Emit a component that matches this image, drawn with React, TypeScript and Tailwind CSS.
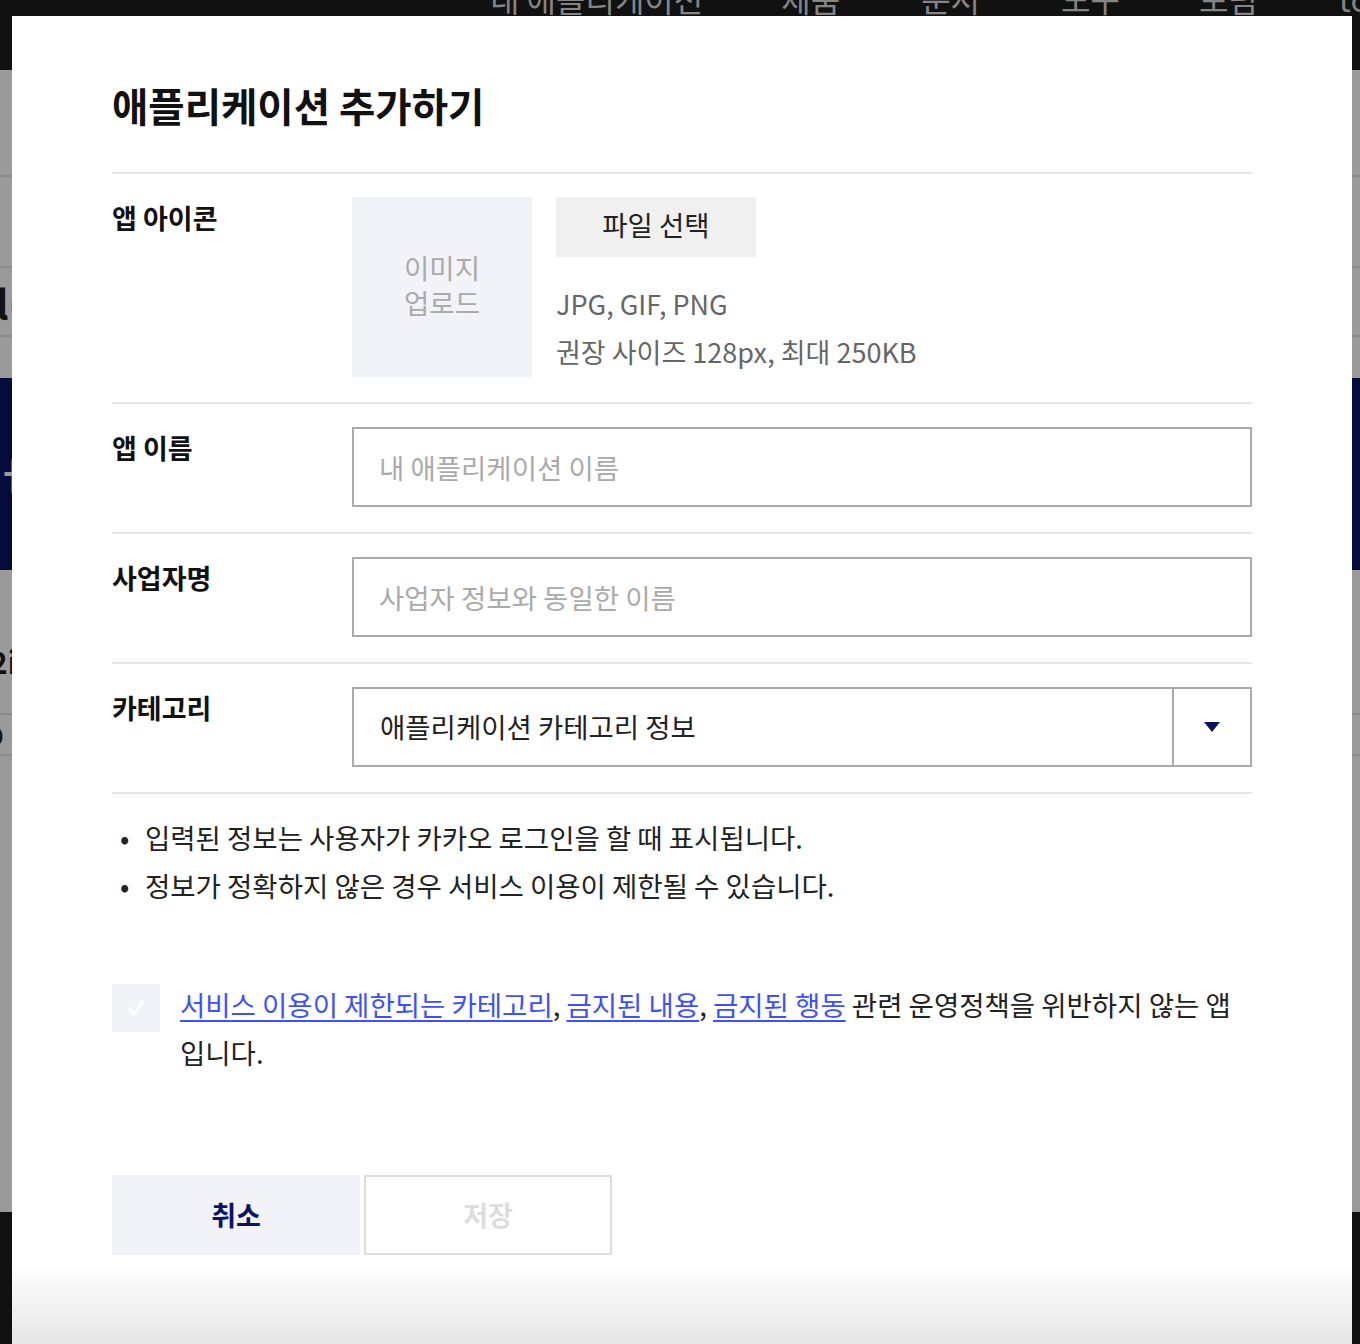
const font = { fontFamily: '"Noto Sans CJK KR", "Noto Sans", sans-serif' };

function Row({ label, children }: { label: string; children: React.ReactNode }) {
  return (
    <div className="flex border-b-2 border-[#e6e6e6] pt-[23px] pb-[25px]">
      <div className="w-[240px] shrink-0 text-[27px] leading-[42px] font-bold text-[#111]">{label}</div>
      <div className="flex-1">{children}</div>
    </div>
  );
}

export default function App() {
  return (
    <div className="relative w-[1360px] h-[1344px] overflow-hidden bg-[#9a9a9a]" style={font}>
      {/* page behind the dialog (already dimmed) */}
      <div className="h-[70px] bg-[#111] overflow-hidden">
        <div className="flex whitespace-nowrap text-[32px] leading-[32px] text-[#858585] -mt-[18px] [&>span]:shrink-0">
          <span className="ml-[490px]">내 애플리케이션</span>
          <span className="ml-[78px]">제품</span>
          <span className="ml-[81px]">문서</span>
          <span className="ml-[81px]">도구</span>
          <span className="ml-[79px]">포럼</span>
          <span className="ml-[81px]">tools</span>
        </div>
      </div>
      <div className="h-[308px]">
        <div className="h-[107px] border-b-2 border-[#8c8c8c]" />
        <div className="h-[91px] border-b-2 border-[#8c8c8c]" />
        <div className="h-[69px] border-b-2 border-[#8c8c8c] flex items-center">
          <span className="-ml-[4px] text-[40px] font-bold leading-[40px] text-[#111]">l(</span>
        </div>
      </div>
      <div className="h-[192px] bg-[#050c3c] flex items-center">
        <span className="-ml-[6px] text-[36px] font-bold text-[#9a9a9a]">ㅓ:</span>
      </div>
      <div className="h-[642px]">
        <div className="h-[76px]" />
        <span className="-ml-[10px] text-[30px] font-bold text-[#111] leading-[30px]">2i</span>
        <div className="h-[36px] border-b-2 border-[#8c8c8c]" />
        <span className="-ml-[14px] text-[26px] text-[#111]">D</span>
        <div className="h-[2px] bg-[#8c8c8c]" />
      </div>
      <div className="h-[132px] bg-[#111]" />

      {/* dialog */}
      <div className="absolute left-[12px] top-[16px] w-[1340px] h-[1328px] bg-[linear-gradient(to_bottom,#fff_calc(100%-80px),#e6e6e6)] px-[100px] pt-[65px]">
        <h1 className="text-[39.5px] leading-[48px] font-bold text-[#111] pb-[43px] border-b-2 border-[#e6e6e6]">애플리케이션 추가하기</h1>

        <Row label="앱 아이콘">
          <div className="flex gap-[24px]">
            <div className="w-[180px] h-[180px] bg-[#f2f3f8] flex items-center justify-center text-center text-[27.5px] leading-[35px] text-[#aaa] pb-[4px]">
              이미지<br />업로드
            </div>
            <div>
              <button className="w-[200px] h-[60px] bg-[#f0f0f0] text-[27.5px] text-[#222] pb-[4px]">파일 선택</button>
              <div className="mt-[23px] text-[27px] leading-[48px] text-[#666]">
                <p>JPG, GIF, PNG</p>
                <p>권장 사이즈 128px, 최대 250KB</p>
              </div>
            </div>
          </div>
        </Row>

        <Row label="앱 이름">
          <input className="w-full h-[80px] border-2 border-[#aaa] px-[25px] text-[27.5px] text-[#222] placeholder:text-[#aaa] outline-none" placeholder="내 애플리케이션 이름" />
        </Row>

        <Row label="사업자명">
          <input className="w-full h-[80px] border-2 border-[#aaa] px-[25px] text-[27.5px] text-[#222] placeholder:text-[#aaa] outline-none" placeholder="사업자 정보와 동일한 이름" />
        </Row>

        <Row label="카테고리">
          <div className="flex h-[80px] border-2 border-[#aaa]">
            <div className="flex-1 flex items-center px-[26px] text-[27.5px] text-[#222]">애플리케이션 카테고리 정보</div>
            <div className="w-[78px] border-l-2 border-[#aaa] flex items-center justify-center">
              <svg width="16" height="10" viewBox="0 0 16 10"><path d="M0 0h16L8 10z" fill="#0b1464" /></svg>
            </div>
          </div>
        </Row>

        <ul className="pt-[19px] text-[27.5px] leading-[48px] text-[#222]">
          <li className="flex"><span className="w-[33px] pl-[8px]">•</span>입력된 정보는 사용자가 카카오 로그인을 할 때 표시됩니다.</li>
          <li className="flex"><span className="w-[33px] pl-[8px]">•</span>정보가 정확하지 않은 경우 서비스 이용이 제한될 수 있습니다.</li>
        </ul>

        <div className="flex gap-[20px] mt-[71px]">
          <div className="w-[48px] h-[48px] shrink-0 mt-[4px] bg-[#f2f3f8] flex items-center justify-center">
            <svg width="20" height="18" viewBox="0 0 20 18"><path d="M3 9l5 6 9-13" stroke="#fff" strokeWidth="3" fill="none" /></svg>
          </div>
          <p className="text-[27.5px] leading-[48px] text-[#222]">
            <a href="#" className="text-[#3d4fff] underline underline-offset-4">서비스 이용이 제한되는 카테고리</a>,{' '}
            <a href="#" className="text-[#3d4fff] underline underline-offset-4">금지된 내용</a>,{' '}
            <a href="#" className="text-[#3d4fff] underline underline-offset-4">금지된 행동</a> 관련 운영정책을 위반하지 않는 앱입니다.
          </p>
        </div>

        <div className="flex gap-[4px] mt-[99px]">
          <button className="w-[248px] h-[80px] bg-[#f2f3f8] text-[27px] font-bold text-[#0b1464]">취소</button>
          <button className="w-[248px] h-[80px] border-2 border-[#ddd] text-[27px] font-bold text-[#ddd]">저장</button>
        </div>
      </div>
    </div>
  );
}
